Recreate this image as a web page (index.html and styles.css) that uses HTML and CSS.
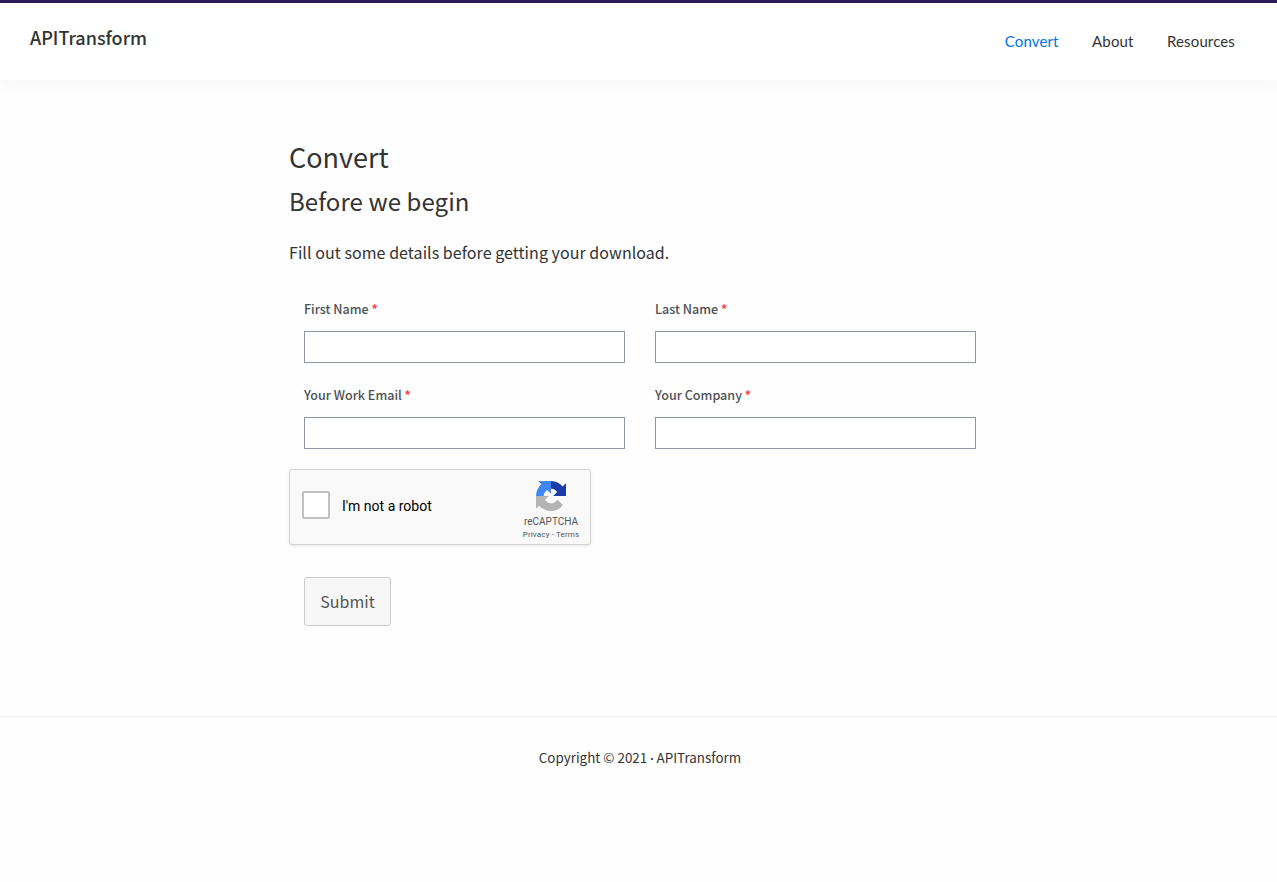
FILE: index.html
```html
<!DOCTYPE html>
<html lang="en">
<head>
<meta charset="utf-8">
<title>Convert - APITransform</title>
<link rel="stylesheet" href="styles.css">
</head>
<body>
<header class="site-header">
  <a class="brand">APITransform</a>
  <nav class="nav">
    <a class="nav-link active">Convert</a>
    <a class="nav-link">About</a>
    <a class="nav-link">Resources</a>
  </nav>
</header>
<main class="content">
  <h1 class="title">Convert</h1>
  <h2 class="subtitle">Before we begin</h2>
  <p class="intro">Fill out some details before getting your download.</p>
  <form class="form">
    <div class="fields">
      <label class="field"><span class="label">First Name <b class="req">*</b></span><input class="input" type="text"></label>
      <label class="field"><span class="label">Last Name <b class="req">*</b></span><input class="input" type="text"></label>
      <label class="field"><span class="label">Your Work Email <b class="req">*</b></span><input class="input" type="text"></label>
      <label class="field"><span class="label">Your Company <b class="req">*</b></span><input class="input" type="text"></label>
    </div>
    <div class="captcha">
      <span class="checkbox"></span>
      <span class="captcha-text">I'm not a robot</span>
      <div class="captcha-brand">
        <svg class="captcha-logo" viewBox="0 0 64 64">
          <path fill="#1c3aa9" d="M64 31.955l-.033-1.37V4.687l-7.16 7.16C50.948 4.674 42.033.093 32.05.093c-10.4 0-19.622 4.96-25.458 12.64l11.736 11.86a15.55 15.55 0 0 1 4.754-5.334c2.05-1.6 4.952-2.906 8.968-2.906.485 0 .86.057 1.135.163 4.976.393 9.288 3.14 11.828 7.124l-8.307 8.307L64 31.953"/>
          <path fill="#4285f4" d="M31.862.094l-1.37.033H4.594l7.16 7.16C4.58 13.147 0 22.06 0 32.046c0 10.4 4.96 19.622 12.64 25.458L24.5 45.768a15.55 15.55 0 0 1-5.334-4.754c-1.6-2.05-2.906-4.952-2.906-8.968 0-.485.057-.86.163-1.135.393-4.976 3.14-9.288 7.124-11.828l8.307 8.307L31.86.095"/>
          <path fill="#b4b4b4" d="M.001 32.045l.033 1.37v25.898l7.16-7.16c5.86 7.173 14.774 11.754 24.76 11.754 10.4 0 19.622-4.96 25.458-12.64l-11.736-11.86a15.55 15.55 0 0 1-4.754 5.334c-2.05 1.6-4.952 2.906-8.968 2.906-.485 0-.86-.057-1.135-.163-4.976-.393-9.288-3.14-11.828-7.124l8.307-8.307c-10.522.04-22.4.066-27.295-.005"/>
        </svg>
        <span class="captcha-name">reCAPTCHA</span>
        <span class="captcha-links">Privacy - Terms</span>
      </div>
    </div>
    <button class="submit" type="button">Submit</button>
  </form>
</main>
<footer class="footer">Copyright © 2021 <span class="dot">·</span> APITransform</footer>
</body>
</html>
```
FILE: styles.css
```css
* { box-sizing: border-box; }
body {
  margin: 0;
  background: #fefefe;
  color: #333;
  font-family: "Noto Sans CJK SC", "Noto Sans", sans-serif;
}
.site-header {
  height: 80px;
  padding: 0 42px 0 30px;
  border-top: 3px solid #2b1a57;
  background: #fff;
  box-shadow: 0 0 20px rgba(0, 0, 0, 0.05);
  display: flex;
  justify-content: space-between;
}
.brand {
  font-size: 18px;
  line-height: 30px;
  font-weight: 500;
  margin-top: 19px;
}
.nav {
  display: flex;
  gap: 33.5px;
  margin-top: 23px;
  font-family: Lato, sans-serif;
  font-size: 15px;
  letter-spacing: 0.13px;
  line-height: 30px;
}
.active { color: #0073e5; }
.content {
  width: 702px;
  margin: 0 0 0 289px;
  padding-top: 59px;
  height: 636px;
}
.title, .subtitle, .intro { margin: 0; font-weight: 400; }
.title { font-size: 27px; line-height: 36px; }
.subtitle { font-size: 24px; letter-spacing: 0.08px; line-height: 32px; margin-top: 10px; }
.intro { font-size: 16px; letter-spacing: 0.055px; line-height: 28px; margin-top: 21px; }
.fields {
  display: grid;
  grid-template-columns: 321px 321px;
  gap: 24px 30px;
  margin: 33px 15px 0;
}
.field { display: block; height: 62px; }
.label {
  display: block;
  height: 32px;
  font-size: 12.55px;
  line-height: 20px;
  font-weight: 500;
  color: #4d5156;
}
.req { color: #fa4450; font-weight: 700; }
.input {
  display: block;
  width: 321px;
  height: 32px;
  border: 1px solid #8a98a5;
  background: #fff;
}
.captcha {
  width: 302px;
  height: 76px;
  margin-top: 22px;
  border: 1px solid #d3d3d3;
  border-radius: 3px;
  background: #f9f9f9;
  box-shadow: 0 1px 3px rgba(0, 0, 0, 0.1);
  display: flex;
  align-items: center;
  padding-left: 12px;
  font-family: Roboto, sans-serif;
}
.checkbox {
  flex: none;
  width: 28px;
  height: 28px;
  margin-top: -4px;
  border: 2px solid #c1c1c1;
  border-radius: 2px;
  background: #fff;
}
.captcha-text {
  flex: none;
  margin: -1px 0 0 12px;
  width: 164px;
  font-size: 14px;
  line-height: 17px;
  color: #000;
}
.captcha-brand {
  flex: none;
  width: 78px;
  margin-left: 6px;
  height: 74px;
  padding-top: 11px;
  display: flex;
  flex-direction: column;
  align-items: center;
  color: #555;
}
.captcha-logo { width: 30px; height: 30px; flex: none; }
.captcha-name { font-size: 10px; line-height: 12px; margin-top: 5px; }
.captcha-links { font-size: 8px; letter-spacing: 0.15px; line-height: 10px; margin-top: 2px; }
.submit {
  display: block;
  width: 87px;
  height: 49px;
  margin: 32px 0 0 15px;
  padding: 0 0 2px;
  border: 1px solid #ccc;
  border-radius: 3px;
  background: #f7f7f7;
  color: #555;
  font-family: inherit;
  font-size: 16px;
}
.footer {
  border-top: 1px solid #eee;
  padding: 28px 0 0 3px;
  text-align: center;
  font-size: 13.4px;
  line-height: 24px;
}
.dot { font-family: Lato, sans-serif; font-size: 13px; }
```
